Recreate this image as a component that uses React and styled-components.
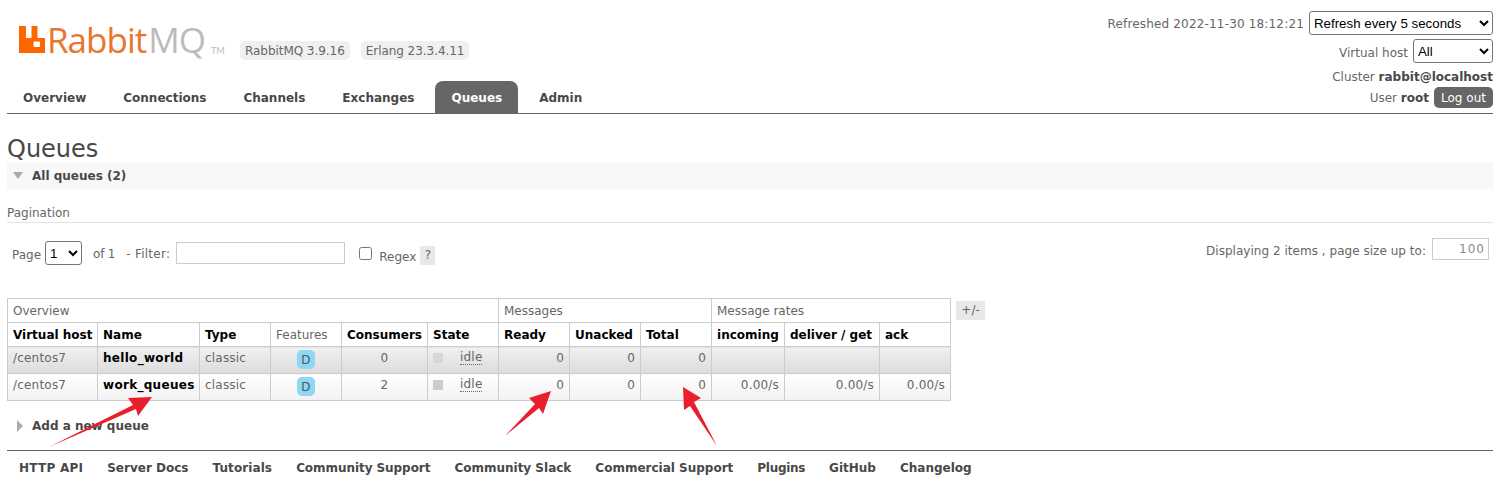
import styled, { createGlobalStyle } from "styled-components";

const TABS = ["Overview", "Connections", "Channels", "Exchanges", "Queues", "Admin"];
const FOOTER_LINKS = [
  { label: "HTTP API", tracking: 0.25 },
  { label: "Server Docs", tracking: 0 },
  { label: "Tutorials", tracking: 0.1 },
  { label: "Community Support", tracking: -0.06 },
  { label: "Community Slack", tracking: 0 },
  { label: "Commercial Support", tracking: 0 },
  { label: "Plugins", tracking: -0.3 },
  { label: "GitHub", tracking: 0 },
  { label: "Changelog", tracking: 0 },
];
const QUEUES = [
  { name: "hello_world", consumers: 0, rates: ["", "", ""] },
  { name: "work_queues", consumers: 2, rates: ["0.00/s", "0.00/s", "0.00/s"] },
];
const COLUMN_WIDTHS = [90, 102, 71, 71, 86, 71, 71, 71, 71, 73, 95, 71];

export default function App() {
  return (
    <Page>
      <GlobalStyle />
      <Header>
        <Brand>
          <LogoRow>
            <Logo>
              <LogoMark viewBox="0 0 26 27">
                <path d="M0 0h7v12h5.500V0h6v12H26v15H0z M15.500 15.500a1 1 0 0 0-1 1v3.500a1 1 0 0 0 1 1H20a1 1 0 0 0 1-1v-3.500a1 1 0 0 0-1-1z" fillRule="evenodd" />
              </LogoMark>
              <LogoWord>Rabbit</LogoWord>
              <LogoWord $grey>MQ</LogoWord>
              <LogoTm>TM</LogoTm>
            </Logo>
            <Versions>
              <Pill>RabbitMQ 3.9.16</Pill>
              <Pill>Erlang 23.3.4.11</Pill>
            </Versions>
          </LogoRow>
          <Tabs>
            {TABS.map((tab) => (
              <Tab key={tab} $active={tab === "Queues"}>
                {tab}
              </Tab>
            ))}
          </Tabs>
        </Brand>
        <Status>
          <StatusRow $height={24} $below={4}>
            <StatusLabel $drop={2} $tracking={0.17}>
              Refreshed 2022-11-30 18:12:21
            </StatusLabel>
            <NativeSelect $width={184} defaultValue="5">
              <option value="5">Refresh every 5 seconds</option>
            </NativeSelect>
          </StatusRow>
          <StatusRow $height={24} $below={4}>
            <StatusLabel $drop={4}>Virtual host</StatusLabel>
            <NativeSelect $width={80} defaultValue="all">
              <option value="all">All</option>
            </NativeSelect>
          </StatusRow>
          <StatusRow $height={19} $below={1}>
            <StatusLabel>
              Cluster <b>rabbit@localhost</b>
            </StatusLabel>
          </StatusRow>
          <StatusRow $height={21} $below={0}>
            <StatusLabel>
              User <b>root</b>
            </StatusLabel>
            <LogOut>Log out</LogOut>
          </StatusRow>
        </Status>
      </Header>

      <Title>Queues</Title>
      <SectionBar>
        <TriangleDown />
        All queues (2)
      </SectionBar>

      <PaginationLabel>Pagination</PaginationLabel>
      <PaginationRow>
        <PageControls>
          <PageLabel>Page</PageLabel>
          <NativeSelect $width={37} defaultValue="1">
            <option value="1">1</option>
          </NativeSelect>
          <OfLabel>of 1</OfLabel>
          <FilterLabel>- Filter:</FilterLabel>
          <FilterInput />
          <RegexCheck type="checkbox" />
          <RegexLabel>Regex</RegexLabel>
          <HelpBox>?</HelpBox>
        </PageControls>
        <PageSize>
          <PageSizeLabel>Displaying 2 items , page size up to:</PageSizeLabel>
          <PageSizeInput readOnly value="100" />
        </PageSize>
      </PaginationRow>

      <TableRow>
        <Table>
          <colgroup>
            {COLUMN_WIDTHS.map((w, i) => (
              <col key={i} width={w} />
            ))}
          </colgroup>
          <thead>
            <tr>
              <GroupCell colSpan={6}>Overview</GroupCell>
              <GroupCell colSpan={3}>Messages</GroupCell>
              <GroupCell colSpan={3}>Message rates</GroupCell>
            </tr>
            <tr>
              <HeadCell>Virtual host</HeadCell>
              <HeadCell>Name</HeadCell>
              <HeadCell>Type</HeadCell>
              <GroupCell>Features</GroupCell>
              <HeadCell>Consumers</HeadCell>
              <HeadCell>State</HeadCell>
              <HeadCell>Ready</HeadCell>
              <HeadCell>Unacked</HeadCell>
              <HeadCell>Total</HeadCell>
              <HeadCell>incoming</HeadCell>
              <HeadCell>deliver / get</HeadCell>
              <HeadCell>ack</HeadCell>
            </tr>
          </thead>
          <tbody>
            {QUEUES.map((queue, i) => (
              <QueueRow key={queue.name} $alt={i === 0}>
                <td>/centos7</td>
                <NameCell>{queue.name}</NameCell>
                <td>classic</td>
                <BadgeCell>
                  <FeatureBadge>D</FeatureBadge>
                </BadgeCell>
                <CenterCell>{queue.consumers}</CenterCell>
                <td>
                  <StateWrap>
                    <StateDot $alt={i === 0} />
                    <IdleText>idle</IdleText>
                  </StateWrap>
                </td>
                <NumberCell>0</NumberCell>
                <NumberCell>0</NumberCell>
                <NumberCell>0</NumberCell>
                {queue.rates.map((rate, j) => (
                  <NumberCell key={j}>{rate}</NumberCell>
                ))}
              </QueueRow>
            ))}
          </tbody>
        </Table>
        <ColumnsToggle>+/-</ColumnsToggle>
      </TableRow>

      <AddQueue>
        <TriangleRight />
        Add a new queue
      </AddQueue>

      <Footer>
        {FOOTER_LINKS.map(({ label, tracking }) => (
          <FooterLink key={label} $tracking={tracking}>
            {label}
          </FooterLink>
        ))}
      </Footer>

      {/* red annotation arrows drawn over the screenshot */}
      <Annotations viewBox="0 0 1509 491">
        <polygon points="152,397 128,398 133,405 49,447 136,409 138,416" />
        <polygon points="551,391 529,398 535,404 505,436 539,408 543,414" />
        <polygon points="683,387 701,398 694,402 717,446 690,406 684,410" />
      </Annotations>
    </Page>
  );
}

const GlobalStyle = createGlobalStyle`
  html, body {
    margin: 0;
    padding: 0;
    background: #fff;
    overflow: hidden;
  }
  body {
    font-family: "DejaVu Sans", Verdana, sans-serif;
    font-size: 12px;
    color: #666;
  }
`;

const Page = styled.div`
  position: relative;
  box-sizing: border-box;
  width: 1509px;
  height: 491px;
  padding: 0 16px 0 7px;
  overflow: hidden;
`;

const Header = styled.header`
  display: flex;
  justify-content: space-between;
  height: 114px;
  box-sizing: border-box;
  border-bottom: 1px solid #666;
`;

const Brand = styled.div`
  display: flex;
  flex-direction: column;
`;

const LogoRow = styled.div`
  display: flex;
  align-items: flex-end;
  height: 81px;
`;

const Logo = styled.div`
  display: flex;
  align-items: flex-start;
  width: 210px;
  margin: 0 0 21px 12px;
  height: 34px;
`;

const LogoMark = styled.svg`
  width: 26px;
  height: 27px;
  fill: #f60;
  flex-shrink: 0;
`;

const LogoWord = styled.span`
  font-family: "Open Sans", "Lato", sans-serif;
  font-weight: 400;
  font-size: 35px;
  line-height: 27px;
  letter-spacing: -1px;
  color: ${({ $grey }) => ($grey ? "#bbb" : "#e8762c")};
  margin-left: 2px;
`;

const LogoTm = styled.span`
  font-family: "Lato", sans-serif;
  font-size: 9px;
  color: #bbb;
  margin: 19px 0 0 6px;
`;

const Versions = styled.div`
  display: flex;
  gap: 11px;
  margin: 0 0 21px 11px;
`;

const Pill = styled.span`
  background: #f0f0f0;
  border-radius: 5px;
  padding: 0 5px;
  height: 19px;
  line-height: 20px;
  letter-spacing: -0.05px;
  white-space: nowrap;
  color: #666;
`;

const Tabs = styled.nav`
  display: flex;
  gap: 5px;
`;

const Tab = styled.a`
  height: 32px;
  line-height: 35px;
  padding: 0 16px;
  font-weight: bold;
  border-radius: 8px 8px 0 0;
  background: ${({ $active }) => ($active ? "#666" : "transparent")};
  color: ${({ $active }) => ($active ? "#fff" : "#484848")};
`;

const Status = styled.div`
  display: flex;
  flex-direction: column;
  align-items: flex-end;
  padding-top: 11px;
`;

const StatusRow = styled.div`
  display: flex;
  flex-shrink: 0;
  align-items: center;
  justify-content: flex-end;
  gap: 5px;
  height: ${({ $height }) => $height}px;
  margin-bottom: ${({ $below }) => $below}px;
  b {
    color: #484848;
  }
`;

const StatusLabel = styled.span`
  margin-top: ${({ $drop }) => $drop || 0}px;
  letter-spacing: ${({ $tracking }) => $tracking || 0}px;
`;

const NativeSelect = styled.select`
  width: ${({ $width }) => $width}px;
  height: 24px;
  box-sizing: border-box;
  font-family: "Liberation Sans", Arial, sans-serif;
  font-size: 13.3px;
  color: #000;
  background: #fff;
  border: 1px solid #767676;
  border-radius: 3px;
`;

const LogOut = styled.button`
  width: 59px;
  height: 21px;
  padding: 0;
  border: 0;
  border-radius: 5px;
  background: #666;
  color: #fff;
  font: 12px "DejaVu Sans", sans-serif;
`;

const Title = styled.h1`
  margin: 21px 0 0;
  height: 27px;
  font-size: 24px;
  line-height: 28px;
  font-weight: normal;
  color: #484848;
`;

const SectionBar = styled.div`
  display: flex;
  align-items: center;
  height: 27px;
  padding-left: 6px;
  background: #f8f8f8;
  color: #484848;
  font-weight: bold;
`;

const TriangleDown = styled.span`
  width: 0;
  height: 0;
  margin-right: 9px;
  border-left: 5.500px solid transparent;
  border-right: 5.500px solid transparent;
  border-top: 7px solid #aaa;
`;

const TriangleRight = styled.span`
  width: 0;
  height: 0;
  margin: 0 9px 0 10px;
  border-top: 6.500px solid transparent;
  border-bottom: 6.500px solid transparent;
  border-left: 6px solid #aaa;
`;

const PaginationLabel = styled.div`
  margin-top: 16px;
  height: 17px;
  line-height: 16px;
  border-bottom: 1px solid #e2e2e2;
`;

const PaginationRow = styled.div`
  display: flex;
  justify-content: space-between;
  align-items: flex-start;
  padding: 17px 4px 0 5px;
  height: 75px;
  box-sizing: border-box;
`;

const PageControls = styled.div`
  display: flex;
  align-items: center;
  height: 26px;
  gap: 4px;
`;

const PageLabel = styled.span`
  margin-top: 4px;
`;

const OfLabel = styled.span`
  margin: 2px 0 0 7px;
  letter-spacing: -0.2px;
`;

const FilterLabel = styled.span`
  margin: 2px 0 0 7px;
  letter-spacing: 0.25px;
`;

const FilterInput = styled.input`
  width: 169px;
  height: 22px;
  margin-left: 2px;
  box-sizing: border-box;
  border: 1px solid #ccc;
  padding: 0 4px;
`;

const RegexCheck = styled.input`
  width: 13px;
  height: 13px;
  margin: 0 0 0 10px;
`;

const RegexLabel = styled.span`
  margin: 8px 0 0 3px;
`;

const HelpBox = styled.span`
  width: 15px;
  height: 19px;
  line-height: 19px;
  margin-top: 4px;
  text-align: center;
  background: #e8e8e8;
`;

const PageSize = styled.div`
  display: flex;
  align-items: center;
  gap: 6px;
  margin-top: -2px;
`;

const PageSizeLabel = styled.span`
  margin-top: 4px;
  letter-spacing: 0.03px;
`;

const PageSizeInput = styled.input`
  width: 57px;
  height: 22px;
  box-sizing: border-box;
  border: 1px solid #ccc;
  padding: 0 3px;
  text-align: right;
  font: 12px "DejaVu Sans", sans-serif;
  letter-spacing: 1px;
  color: #888;
`;

const TableRow = styled.div`
  display: flex;
  align-items: flex-start;
  gap: 5px;
`;

const Table = styled.table`
  border-collapse: collapse;
  table-layout: fixed;
  width: 944px;
  td,
  th {
    box-sizing: border-box;
    border: 1px solid #ccc;
    padding: 0 5px;
    white-space: nowrap;
  }
`;

const GroupCell = styled.th`
  height: 24px;
  text-align: left;
  font-weight: normal;
  color: #666;
`;

const HeadCell = styled.th`
  height: 24px;
  text-align: left;
  font-weight: bold;
  color: #000;
`;

const QueueRow = styled.tr`
  td {
    height: 27px;
    padding-bottom: 5px;
    color: #666;
    letter-spacing: 0.2px;
    background: ${({ $alt }) =>
      $alt
        ? "linear-gradient(#f0f0f0, #dcdcdc)"
        : "linear-gradient(#fff, #f2f2f2)"};
  }
`;

const NameCell = styled.td`
  && {
    font-weight: bold;
    color: #000;
    letter-spacing: 0.3px;
  }
`;

const CenterCell = styled.td`
  text-align: center;
`;

const BadgeCell = styled(CenterCell)`
  && {
    padding: 0 0 2px;
  }
`;

const NumberCell = styled.td`
  text-align: right;
`;

const FeatureBadge = styled.span`
  display: block;
  width: 18px;
  height: 19px;
  line-height: 20px;
  margin: 0 auto;
  border-radius: 5px;
  background: #8cd8f6;
  color: #555;
`;

const StateWrap = styled.div`
  display: flex;
  align-items: center;
`;

const StateDot = styled.span`
  width: 10px;
  height: 10px;
  margin-right: 17px;
  background: ${({ $alt }) => ($alt ? "#d8d8d8" : "#ccc")};
`;

const IdleText = styled.span`
  border-bottom: 1px dotted #666;
  line-height: 13px;
`;

const ColumnsToggle = styled.span`
  width: 29px;
  height: 19px;
  line-height: 19px;
  margin-top: 3px;
  text-align: center;
  background: #e8e8e8;
`;

const AddQueue = styled.div`
  display: flex;
  align-items: center;
  margin-top: 17px;
  height: 15px;
  font-weight: bold;
  color: #484848;
`;

const Footer = styled.footer`
  display: flex;
  gap: 24px;
  margin-top: 17px;
  padding: 10px 0 0 12px;
  border-top: 1px solid #666;
  height: 20px;
`;

const FooterLink = styled.a`
  font-weight: bold;
  color: #484848;
  letter-spacing: ${({ $tracking }) => $tracking}px;
  white-space: nowrap;
`;

const Annotations = styled.svg`
  position: absolute;
  left: 0;
  top: 0;
  width: 1509px;
  height: 491px;
  fill: #e8202e;
  pointer-events: none;
`;
